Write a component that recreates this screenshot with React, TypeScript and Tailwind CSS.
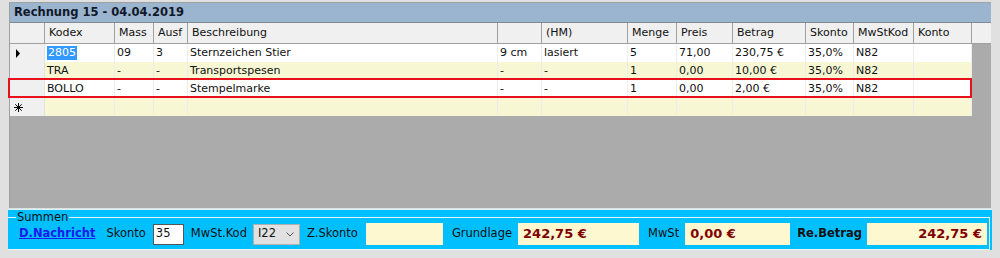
import React from "react";

type Col = { key: string; label: string; w: number };

const COLS: Col[] = [
  { key: "kodex", label: "Kodex", w: 70 },
  { key: "mass", label: "Mass", w: 39 },
  { key: "ausf", label: "Ausf", w: 34 },
  { key: "beschr", label: "Beschreibung", w: 310 },
  { key: "dim", label: "", w: 44 },
  { key: "hm", label: "(HM)", w: 86 },
  { key: "menge", label: "Menge", w: 49 },
  { key: "preis", label: "Preis", w: 56 },
  { key: "betrag", label: "Betrag", w: 73 },
  { key: "skonto", label: "Skonto", w: 48 },
  { key: "mwst", label: "MwStKod", w: 60 },
  { key: "konto", label: "Konto", w: 58 },
];

type Row = Record<string, string>;

const ROWS: Row[] = [
  { kodex: "2805", mass: "09", ausf: "3", beschr: "Sternzeichen Stier", dim: "9 cm", hm: "lasiert", menge: "5", preis: "71,00", betrag: "230,75 €", skonto: "35,0%", mwst: "N82", konto: "" },
  { kodex: "TRA", mass: "-", ausf: "-", beschr: "Transportspesen", dim: "-", hm: "-", menge: "1", preis: "0,00", betrag: "10,00 €", skonto: "35,0%", mwst: "N82", konto: "" },
  { kodex: "BOLLO", mass: "-", ausf: "-", beschr: "Stempelmarke", dim: "-", hm: "-", menge: "1", preis: "0,00", betrag: "2,00 €", skonto: "35,0%", mwst: "N82", konto: "" },
];

const FONT = { fontFamily: '"DejaVu Sans", Verdana, sans-serif' };

function RowPointer() {
  return (
    <svg width="6" height="9" viewBox="0 0 6 9" className="block">
      <path d="M1 0 L5 4.5 L1 9 Z" fill="#000" />
    </svg>
  );
}

function NewRowStar() {
  return (
    <svg width="9" height="9" viewBox="0 0 9 9" className="block">
      <path d="M4.5 0 V9 M0 4.5 H9 M1.3 1.3 L7.7 7.7 M7.7 1.3 L1.3 7.7" stroke="#000" strokeWidth="1" />
    </svg>
  );
}

function GridRow({ row, idx }: { row: Row; idx: number }) {
  const bg = idx % 2 === 0 ? "bg-white" : "bg-[#f7f7d4]";
  return (
    <div className="flex h-[18px]">
      <div className="flex w-[35px] items-center border-r border-[#e2e2e2] bg-[#f0f0f0] pl-[5px]">
        {idx === 0 && <RowPointer />}
      </div>
      {COLS.map((c) => (
        <div
          key={c.key}
          style={{ width: c.w }}
          className={`flex items-center border-r border-[#ececec] pl-[2px] ${bg}`}
        >
          {idx === 0 && c.key === "kodex" ? (
            <span className="bg-[#3399ff] px-[1px] leading-[14px] text-white">{row[c.key]}</span>
          ) : (
            <span className="whitespace-nowrap">{row[c.key]}</span>
          )}
        </div>
      ))}
    </div>
  );
}

function Field({ children, w, right }: { children?: React.ReactNode; w: number; right?: boolean }) {
  return (
    <div
      style={{ width: w }}
      className={`flex h-[22px] items-center bg-[#fdf8d0] px-[5px] text-[13px] font-bold text-[#800000] ${right ? "justify-end" : ""}`}
    >
      {children}
    </div>
  );
}

export default function App() {
  return (
    <div style={FONT} className="h-[258px] w-[1000px] overflow-hidden bg-[#e0e0e0] pt-[2px] text-[11px] text-[#111]">
      {/* Rechnung panel */}
      <div className="ml-[9px] w-[982px] border-l border-t border-[#a0a0a0]">
        <div className="flex h-[20px] items-center border-b border-[#7f8a96] bg-[#9bb4cf] pl-[4px] text-[11.5px] font-bold text-[#101828]">
          Rechnung 15 - 04.04.2019
        </div>
        <div className="relative h-[185px] bg-[#ababab]">
          <div className="flex h-[21px] border-b border-[#a0a0a0] bg-[#f0f0f0]">
            <div className="w-[35px] border-r border-[#a0a0a0]" />
            {COLS.map((c) => (
              <div
                key={c.key}
                style={{ width: c.w }}
                className="flex items-center border-r border-[#a0a0a0] pl-[4px] whitespace-nowrap"
              >
                {c.label}
              </div>
            ))}
          </div>
          {ROWS.map((r, i) => (
            <GridRow key={i} row={r} idx={i} />
          ))}
          <div className="flex h-[18px]">
            <div className="flex w-[35px] items-center border-r border-[#e2e2e2] bg-[#f0f0f0] pl-[4px]">
              <NewRowStar />
            </div>
            {COLS.map((c) => (
              <div key={c.key} style={{ width: c.w }} className="border-r border-[#ececec] bg-[#f7f7d4]" />
            ))}
          </div>
          {/* highlight around the BOLLO row */}
          <div className="pointer-events-none absolute left-[-2px] top-[55px] h-[20px] w-[964px] border-2 border-[#e8101a]" />
        </div>
      </div>

      {/* Summen */}
      <div className="ml-[8px] mt-[1px] w-[984px] border-t border-[#d8f4ff] bg-[#00bfff] pt-[1px]">
        <fieldset className="mr-[2px] border-b border-r border-t border-[#e6f8ff] pb-[3px]">
          <legend className="ml-[8px] px-[1px] text-[11.5px] leading-[13px]">Summen</legend>
          <div className="-mt-[2px] flex h-[24px] items-center text-[11.5px]">
            <a className="ml-[11px] font-bold text-[#1a1aee] underline">D.Nachricht</a>
            <span className="ml-[11px]">Skonto</span>
            <div className="ml-[7px] flex h-[21px] w-[31px] items-center border border-[#555] bg-white pl-[2px]">35</div>
            <span className="ml-[7px]">MwSt.Kod</span>
            <div className="ml-[6px] flex h-[21px] w-[47px] items-center justify-between border border-[#b0b0b0] bg-[#e1e1e1] pl-[4px] pr-[5px]">
              <span>I22</span>
              <svg width="8" height="5" viewBox="0 0 8 5">
                <path d="M0.5 0.5 L4 4 L7.5 0.5" stroke="#555" fill="none" strokeWidth="1" />
              </svg>
            </div>
            <span className="ml-[7px]">Z.Skonto</span>
            <div className="ml-[8px]">
              <Field w={77} />
            </div>
            <span className="ml-[9px]">Grundlage</span>
            <div className="ml-[6px]">
              <Field w={121}>242,75 €</Field>
            </div>
            <span className="ml-[9px]">MwSt</span>
            <div className="ml-[6px]">
              <Field w={105}>0,00 €</Field>
            </div>
            <span className="ml-[7px] font-bold">Re.Betrag</span>
            <div className="ml-[5px]">
              <Field w={120} right>242,75 €</Field>
            </div>
          </div>
        </fieldset>
      </div>
    </div>
  );
}
